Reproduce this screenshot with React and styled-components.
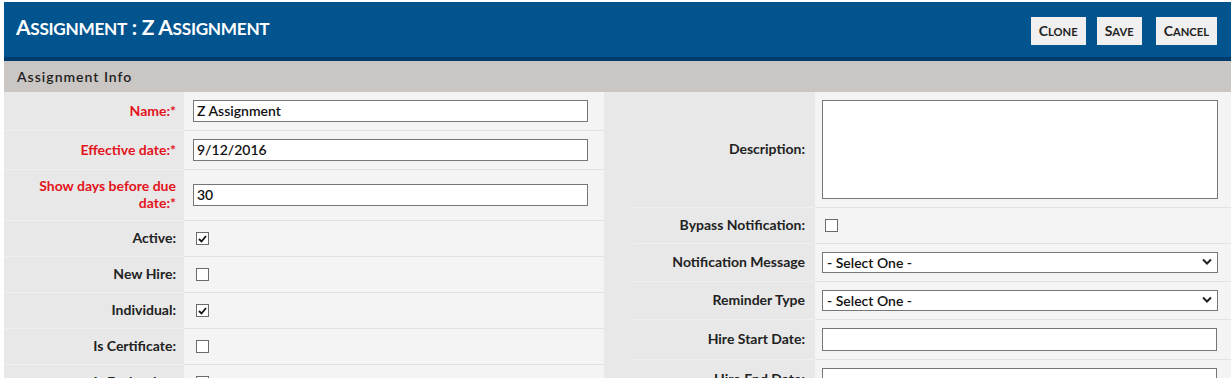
import React from 'react'
import styled, { createGlobalStyle } from 'styled-components'

const GlobalStyle = createGlobalStyle`
  body {
    margin: 0;
    background: #fff;
    font-family: 'Lato', 'Open Sans', sans-serif;
  }
`

const Page = styled.div`
  padding: 2px 0 0 4px;
`

const Header = styled.div`
  height: 55px;
  background: #02548f;
  border-bottom: 4px solid #003b6c;
  display: flex;
  align-items: center;
  justify-content: space-between;
  padding: 0 14px 0 12px;
`

const Title = styled.h1`
  margin: 0 0 6px 0;
  color: #fff;
  font-size: 21px;
  font-weight: 700;
  letter-spacing: -0.3px;
`

// small caps drawn as a full-size first letter and a reduced upper-case rest
const Small = styled.span`
  font-size: ${props => props.scale || 0.82}em;
  text-transform: uppercase;
`

const Caps = ({ text, scale }) =>
  text.split(' ').map((word, i) => (
    <React.Fragment key={i}>
      {i > 0 && ' '}
      {word[0].toUpperCase()}
      {word.length > 1 && <Small scale={scale}>{word.slice(1)}</Small>}
    </React.Fragment>
  ))

const Actions = styled.div`
  display: flex;
  align-items: center;
  padding-top: 2px;
`

const Button = styled.button`
  height: 28px;
  margin-left: ${props => props.gap || 11}px;
  padding: 0 8px;
  border: none;
  background: #f0f0f0;
  color: #222;
  font-family: 'Lato', sans-serif;
  font-size: 14px;
  font-weight: 700;
  cursor: pointer;
`

const SectionBar = styled.div`
  height: 31px;
  background: #c9c6c3;
  display: flex;
  align-items: center;
  padding-left: 13px;
  font-size: 14px;
  font-weight: 600;
  letter-spacing: 1px;
  color: #1e1e1e;
`

const Form = styled.div`
  display: grid;
  grid-template-columns: 600px 598px;
  column-gap: 29px;
  background: #e8e8e8;
`

const Column = styled.div`
  display: flex;
  flex-direction: column;
`

const Row = styled.div`
  display: flex;
`

const Label = styled.div`
  width: ${props => props.width}px;
  flex-shrink: 0;
  box-sizing: border-box;
  display: flex;
  align-items: center;
  justify-content: flex-end;
  text-align: right;
  padding: 7px ${props => props.padRight}px 9px 16px;
  border-bottom: 1px solid #efefef;
  font-size: 14px;
  line-height: 17px;
  font-weight: 700;
  color: ${props => (props.required ? '#e3141c' : '#222')};
`

const Field = styled.div`
  flex: 1;
  display: flex;
  align-items: center;
  background: #f4f4f4;
  padding: 8px ${props => props.padLeft}px;
  border-bottom: 1px solid #e2e2e2;
`

const TextInput = styled.input`
  width: 395px;
  height: ${props => props.h || 22}px;
  box-sizing: border-box;
  border: 1px solid #767676;
  background: #fff;
  padding: 0 3px 1px;
  font-family: 'Lato', sans-serif;
  font-size: 14px;
  font-weight: 600;
  color: #111;
  outline: none;
`

const TextArea = styled.textarea`
  width: 396px;
  height: 99px;
  box-sizing: border-box;
  border: 1px solid #767676;
  background: #fff;
  resize: none;
  display: block;
  outline: none;
`

const SelectWrap = styled.div`
  position: relative;
  width: 396px;
`

const Select = styled.select`
  width: 100%;
  height: 21px;
  box-sizing: border-box;
  appearance: none;
  border: 1px solid #767676;
  border-radius: 0;
  background: #fff;
  padding: 0 0 0 4px;
  font-family: 'Lato', sans-serif;
  font-size: 14px;
  font-weight: 600;
  color: #111;
  outline: none;
`

const Chevron = styled.svg`
  position: absolute;
  right: 6px;
  top: 6px;
  pointer-events: none;
`

const Box = styled.span`
  width: 13px;
  height: 13px;
  box-sizing: border-box;
  margin: 3px;
  border: 1px solid #6a6a6a;
  background: #fff;
  display: inline-flex;
  align-items: center;
  justify-content: center;
`

const Checkbox = ({ checked }) => (
  <Box role="checkbox" aria-checked={checked}>
    {checked && (
      <svg width="9" height="8" viewBox="0 0 9 8">
        <polyline points="1,4 3.5,6.5 8,1" fill="none" stroke="#111" strokeWidth="1.8" />
      </svg>
    )}
  </Box>
)

const Dropdown = () => (
  <SelectWrap>
    <Select defaultValue="">
      <option value="">- Select One -</option>
    </Select>
    <Chevron width="10" height="8" viewBox="0 0 10 8">
      <polyline points="1,1.5 5,5.5 9,1.5" fill="none" stroke="#222" strokeWidth="2" />
    </Chevron>
  </SelectWrap>
)

const leftRows = [
  { label: 'Name:*', required: true, input: <TextInput defaultValue="Z Assignment" /> },
  { label: 'Effective date:*', required: true, input: <TextInput defaultValue="9/12/2016" /> },
  { label: 'Show days before due date:*', required: true, input: <TextInput defaultValue="30" /> },
  { label: 'Active:', input: <Checkbox checked /> },
  { label: 'New Hire:', input: <Checkbox /> },
  { label: 'Individual:', input: <Checkbox checked /> },
  { label: 'Is Certificate:', input: <Checkbox /> },
  { label: 'Is Evaluation:', input: <Checkbox checked /> },
]

const rightRows = [
  { label: 'Description:', input: <TextArea /> },
  { label: 'Bypass Notification:', input: <Checkbox /> },
  { label: 'Notification Message', input: <Dropdown /> },
  { label: 'Reminder Type', input: <Dropdown /> },
  { label: 'Hire Start Date:', input: <TextInput h={23} /> },
  { label: 'Hire End Date:', input: <TextInput h={23} /> },
]

const App = () => (
  <Page>
    <GlobalStyle />
    <Header>
      <Title><Caps text="Assignment : Z Assignment" /></Title>
      <Actions>
        <Button><Caps text="Clone" scale={0.8} /></Button>
        <Button><Caps text="Save" scale={0.8} /></Button>
        <Button gap={14}><Caps text="Cancel" scale={0.8} /></Button>
      </Actions>
    </Header>
    <SectionBar>Assignment Info</SectionBar>
    <Form>
      <Column>
        {leftRows.map((r, i) => (
          <Row key={i}>
            <Label width={180} padRight={8} required={r.required}>{r.label}</Label>
            <Field padLeft={9}>{r.input}</Field>
          </Row>
        ))}
      </Column>
      <Column>
        {rightRows.map((r, i) => (
          <Row key={i}>
            <Label width={182} padRight={10}>{r.label}</Label>
            <Field padLeft={7}>{r.input}</Field>
          </Row>
        ))}
      </Column>
    </Form>
  </Page>
)

export default App
